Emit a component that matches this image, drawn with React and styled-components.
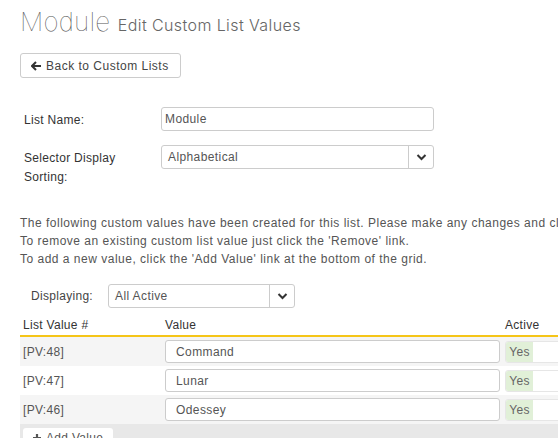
import styled, { createGlobalStyle } from "styled-components";

const Global = createGlobalStyle`
  html, body {
    margin: 0;
    padding: 0;
    background: #fff;
    overflow: hidden;
  }
  body {
    font-family: "Liberation Sans", Arial, sans-serif;
    font-size: 12px;
    color: #444;
  }
`;

const Page = styled.div`
  width: 760px;
  padding: 6px 0 0 20px;
`;

const Title = styled.h1`
  margin: 0;
  font-family: Inter, "Liberation Sans", sans-serif;
  font-weight: 100;
  font-size: 26px;
  color: #555;
  letter-spacing: 0.2px;
  small {
    font-size: 16px;
    font-weight: 300;
    color: #666;
    margin-left: 0;
    letter-spacing: 0.4px;
  }
`;

const BackButton = styled.button`
  margin-top: 16px;
  height: 25px;
  padding: 0 11px 0 10px;
  display: inline-flex;
  align-items: center;
  gap: 4px;
  background: #fff;
  border: 1px solid #ccc;
  border-radius: 3px;
  font-family: "Liberation Sans", Arial, sans-serif;
  font-size: 12px;
  letter-spacing: 0.5px;
  color: #444;
`;

const Form = styled.div`
  margin-top: 29px;
  display: grid;
  grid-template-columns: 141px 273px;
  row-gap: 14px;
  align-items: start;
`;

const Label = styled.div`
  padding: 4px 0 0 4px;
  line-height: 19px;
  letter-spacing: 0.3px;
  color: #333;
`;

const Field = styled.div`
  height: 24px;
  box-sizing: border-box;
  border: 1px solid #ccc;
  border-radius: 3px;
  display: flex;
  align-items: center;
  background: #fff;
  width: ${(p) => p.$w || "100%"};
  font-size: 12px;
  letter-spacing: 0.4px;
  color: #555;
`;

const FieldText = styled.span`
  flex: 1;
  padding-left: ${(p) => p.$pad || "6px"};
`;

const Caret = styled.span`
  width: 24px;
  height: 100%;
  border-left: 1px solid #ccc;
  display: flex;
  align-items: center;
  justify-content: center;
`;

const Intro = styled.div`
  margin-top: 27px;
  line-height: 18px;
  white-space: nowrap;
  letter-spacing: 0.5px;
  color: #555;
`;

const FilterRow = styled.div`
  margin-top: 16px;
  display: flex;
  align-items: center;
  gap: 15px;
  padding-left: 11px;
  letter-spacing: 0.3px;
`;

const Table = styled.div`
  margin-top: 6px;
  width: 620px;
`;

const Row = styled.div`
  display: grid;
  grid-template-columns: 142px 340px 1fr;
  align-items: center;
  background: ${(p) => p.$bg || "#fff"};
  height: ${(p) => p.$h || "29px"};
  border-bottom: ${(p) => (p.$head ? "2px solid #f5c518" : "none")};
`;

const Cell = styled.div`
  padding-left: 3px;
  letter-spacing: 0.3px;
  color: ${(p) => (p.$head ? "#333" : "#555")};
`;

const ValueInput = styled.div`
  height: 23px;
  box-sizing: border-box;
  border: 1px solid #ccc;
  border-radius: 3px;
  background: #fff;
  display: flex;
  align-items: center;
  padding-left: 10px;
  width: 335px;
  letter-spacing: 0.4px;
  color: #555;
`;

const Toggle = styled.div`
  height: 22px;
  box-sizing: border-box;
  border: 1px solid #e6e6e6;
  border-radius: 3px;
  background: #fff;
  display: flex;
  width: 80px;
  overflow: hidden;
`;

const Yes = styled.span`
  width: 27px;
  background: #e1f0d8;
  color: #666;
  display: flex;
  align-items: center;
  justify-content: center;
`;

const Footer = styled.div`
  background: #e8e8e8;
  height: 20px;
  padding: 4px 0 0 3px;
`;

const AddButton = styled.div`
  width: 90px;
  height: 20px;
  background: #fff;
  border-radius: 3px 3px 0 0;
  display: flex;
  align-items: center;
  padding-left: 9px;
  gap: 4px;
  box-sizing: border-box;
  color: #555;
  letter-spacing: 0.3px;
`;

const Chevron = () => (
  <svg width="11" height="8" viewBox="0 0 11 8">
    <path d="M1.5 2l4 4 4-4" fill="none" stroke="#333" strokeWidth="2" />
  </svg>
);

const rows = [
  { id: "[PV:48]", value: "Command" },
  { id: "[PV:47]", value: "Lunar" },
  { id: "[PV:46]", value: "Odessey" },
];

export default function App() {
  return (
    <>
      <Global />
      <Page>
        <Title>
          Module <small>Edit Custom List Values</small>
        </Title>
        <BackButton>
          <svg width="11" height="10" viewBox="0 0 11 10">
            <path d="M5 1L1 5l4 4M1.5 5H10" fill="none" stroke="#333" strokeWidth="2" />
          </svg>
          Back to Custom Lists
        </BackButton>

        <Form>
          <Label>List Name:</Label>
          <Field>
            <FieldText $pad="3px">Module</FieldText>
          </Field>
          <Label>
            Selector Display
            <br />
            Sorting:
          </Label>
          <Field>
            <FieldText>Alphabetical</FieldText>
            <Caret>
              <Chevron />
            </Caret>
          </Field>
        </Form>

        <Intro>
          The following custom values have been created for this list. Please make any changes and click 'Save'.
          <br />
          To remove an existing custom list value just click the 'Remove' link.
          <br />
          To add a new value, click the 'Add Value' link at the bottom of the grid.
        </Intro>

        <FilterRow>
          <span>Displaying:</span>
          <Field $w="187px">
            <FieldText>All Active</FieldText>
            <Caret>
              <Chevron />
            </Caret>
          </Field>
        </FilterRow>

        <Table>
          <Row $head $h="21px">
            <Cell $head>List Value #</Cell>
            <Cell $head>Value</Cell>
            <Cell $head>Active</Cell>
          </Row>
          {rows.map((r, i) => (
            <Row key={r.id} $bg={i % 2 === 0 ? "#f5f5f5" : "#fff"}>
              <Cell>{r.id}</Cell>
              <Cell>
                <ValueInput>{r.value}</ValueInput>
              </Cell>
              <Cell>
                <Toggle>
                  <Yes>Yes</Yes>
                </Toggle>
              </Cell>
            </Row>
          ))}
          <Footer>
            <AddButton>
              <svg width="10" height="10" viewBox="0 0 10 10">
                <path d="M5 1v8M1 5h8" stroke="#555" strokeWidth="2.2" />
              </svg>
              Add Value
            </AddButton>
          </Footer>
        </Table>
      </Page>
    </>
  );
}
